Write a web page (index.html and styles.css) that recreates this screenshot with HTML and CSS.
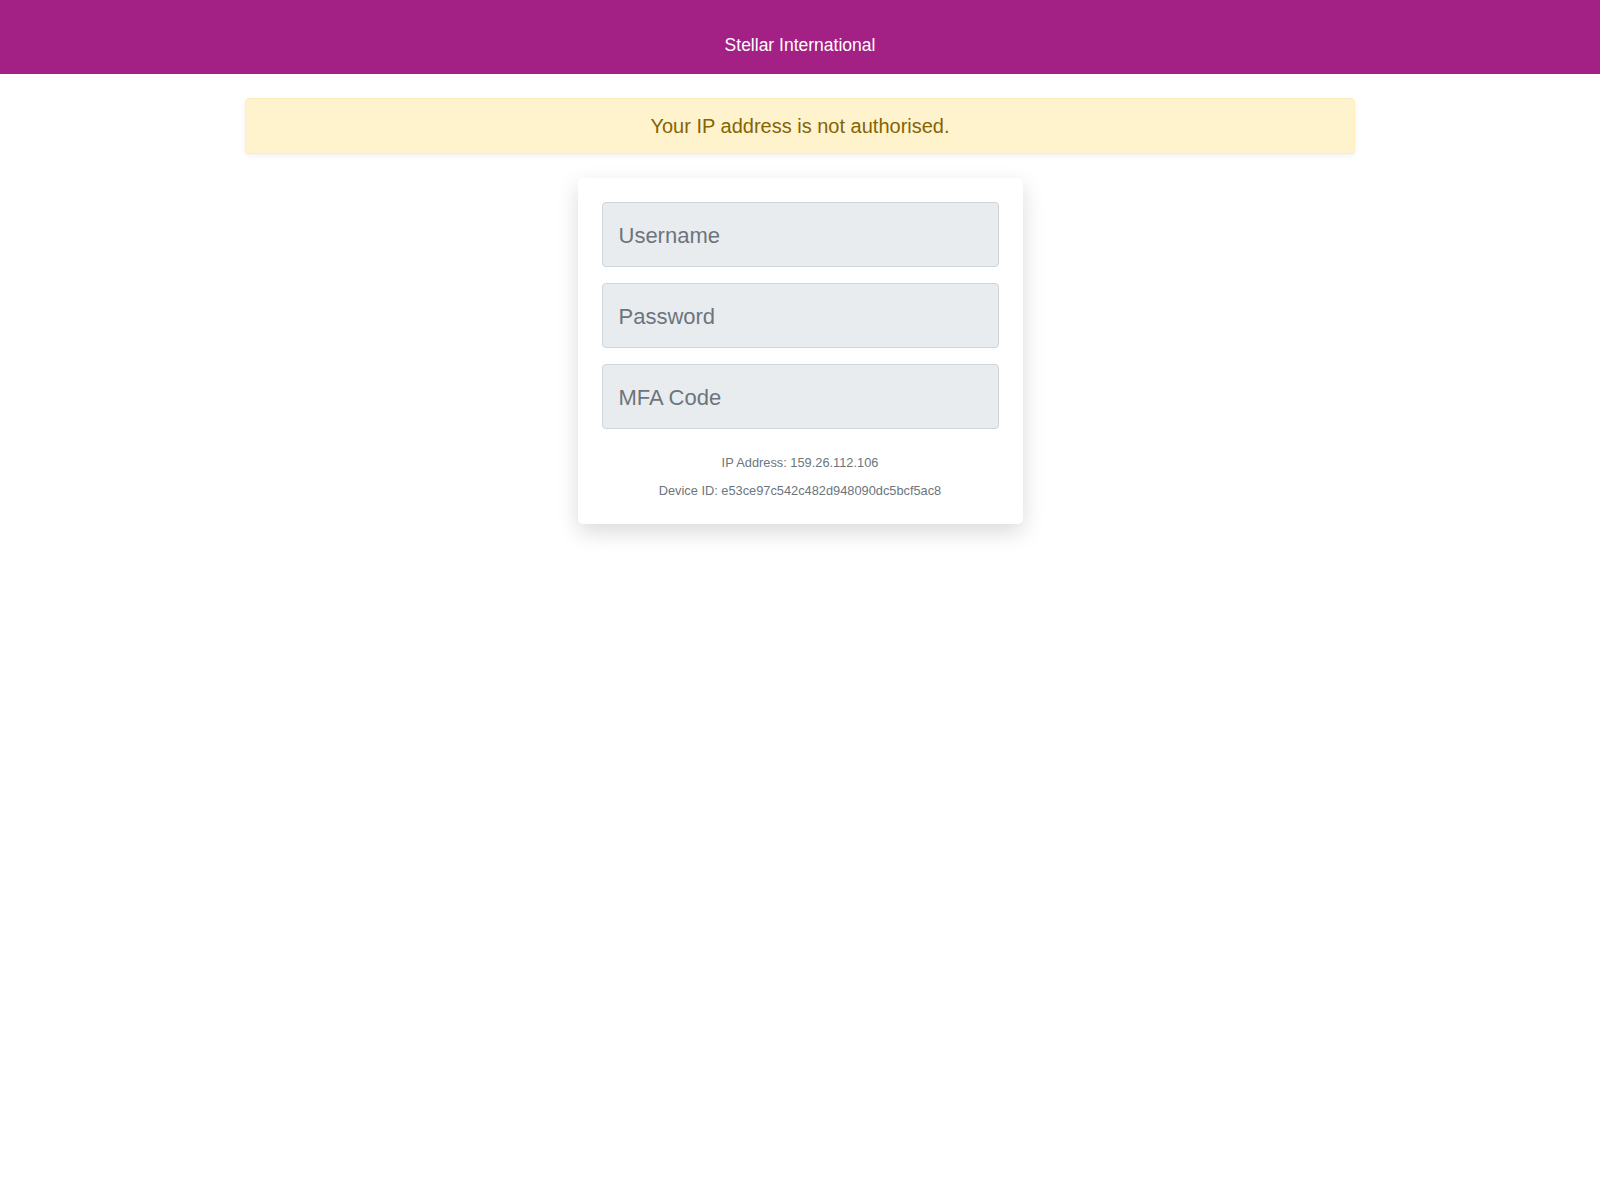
FILE: index.html
```html
<!DOCTYPE html>
<html lang="en">
<head>
<meta charset="utf-8">
<title>Stellar International</title>
<link rel="stylesheet" href="styles.css">
</head>
<body>
<header class="topbar">
  <span class="brand">Stellar International</span>
</header>
<main class="container">
  <div class="alert">Your IP address is not authorised.</div>
  <form class="login-card">
    <input class="field" type="text" placeholder="Username">
    <input class="field" type="password" placeholder="Password">
    <input class="field" type="text" placeholder="MFA Code">
    <div class="info">
      <div class="info-line">IP Address: 159.26.112.106</div>
      <div class="info-line">Device ID: e53ce97c542c482d948090dc5bcf5ac8</div>
    </div>
  </form>
</main>
</body>
</html>
```
FILE: styles.css
```css
* { box-sizing: border-box; }
html, body { margin: 0; padding: 0; }
body {
  font-family: "Liberation Sans", Arial, sans-serif;
  background: #ffffff;
  color: #212529;
  min-height: 100vh;
}
.topbar {
  height: 74px;
  background: #a32085;
  display: flex;
  align-items: center;
  justify-content: center;
  padding-top: 18px;
}
.brand {
  color: #ffffff;
  font-size: 17.5px;
  line-height: 1;
}
.container {
  max-width: 1140px;
  margin: 0 auto;
  padding: 24px 15px 60px;
  display: flex;
  flex-direction: column;
  align-items: center;
}
.alert {
  width: 100%;
  background: #fff3cd;
  border: 1px solid #ffeeba;
  color: #856404;
  border-radius: 4px;
  padding: 12px 20px;
  font-size: 20px;
  line-height: 30px;
  text-align: center;
  box-shadow: 0 2px 5px rgba(0, 0, 0, 0.06);
}
.login-card {
  margin-top: 24px;
  width: 445px;
  background: #ffffff;
  border-radius: 5px;
  padding: 24px;
  box-shadow: 0 8px 22px rgba(0, 0, 0, 0.15);
  display: flex;
  flex-direction: column;
  gap: 16px;
}
.field {
  display: block;
  width: 100%;
  height: 65px;
  margin: 0;
  padding: 2px 16px 0;
  background: #e9ecef;
  border: 1px solid #ced4da;
  border-radius: 4px;
  font-family: "Liberation Sans", Arial, sans-serif;
  font-size: 22px;
  color: #495057;
  outline: none;
}
.field::placeholder {
  color: #6c757d;
  opacity: 1;
}
.info {
  margin-top: 8px;
  display: flex;
  flex-direction: column;
  gap: 9px;
  text-align: center;
}
.info-line {
  font-size: 12.8px;
  line-height: 19px;
  color: #6c757d;
}
```
